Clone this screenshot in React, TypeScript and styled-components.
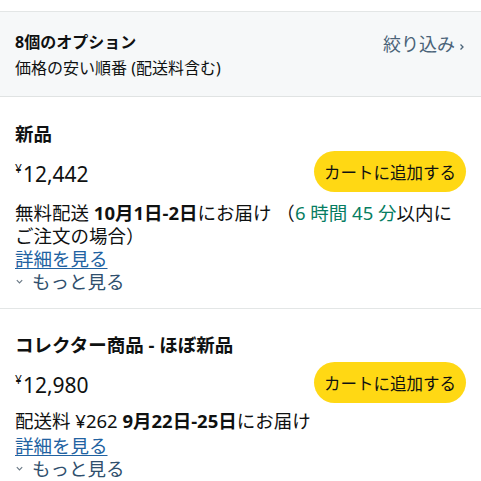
import React from 'react';
import styled, { createGlobalStyle } from 'styled-components';

const GlobalStyle = createGlobalStyle`
  html, body {
    margin: 0;
    padding: 0;
    background: #ffffff;
  }
  body {
    font-family: 'Noto Sans', 'Noto Sans CJK JP', sans-serif;
    color: #0f1111;
  }
`;

const Page = styled.div`
  width: 481px;
  height: 481px;
  overflow: hidden;
  padding-top: 11px;
  box-sizing: border-box;
`;

const Header = styled.div`
  display: flex;
  justify-content: space-between;
  align-items: flex-start;
  background: #f6f8f9;
  border-top: 1px solid #e3e6e6;
  border-bottom: 1px solid #e0e3e3;
  height: 86px;
  box-sizing: border-box;
  padding: 19px 15px 0 15px;
`;

const HeaderText = styled.div`
  display: flex;
  flex-direction: column;
`;

const Count = styled.div`
  font-size: 16px;
  font-weight: 700;
  line-height: 22px;
`;

const Sort = styled.div`
  font-size: 16px;
  line-height: 26px;
  margin-top: 2px;
`;

const Filter = styled.div`
  color: #4a6378;
  font-size: 18px;
  line-height: 26px;
  display: flex;
  align-items: center;
  gap: 3px;
`;

const Offer = styled.div<{ $last?: boolean }>`
  padding: ${(p) => (p.$last ? '23px' : '24px')} 15px 0 15px;
  height: ${(p) => (p.$last ? 'auto' : '212px')};
  box-sizing: border-box;
  border-bottom: ${(p) => (p.$last ? 'none' : '1px solid #e3e6e6')};
`;

const Title = styled.div`
  font-size: 18.5px;
  font-weight: 700;
  line-height: 26px;
`;

const PriceRow = styled.div`
  display: flex;
  justify-content: space-between;
  align-items: center;
  margin-top: 4px;
`;

const Price = styled.div`
  display: flex;
  align-items: flex-start;
  font-size: 21px;
  line-height: 30px;
  margin-top: 4px;
`;

const Yen = styled.span`
  font-size: 12px;
  line-height: 20px;
  margin-right: 1px;
`;

const CartButton = styled.button`
  background: #ffd814;
  border: none;
  border-radius: 21px;
  height: 41px;
  width: 152px;
  font-family: inherit;
  font-size: 16.5px;
  color: #0f1111;
  padding: 0;
  cursor: pointer;
`;

const Delivery = styled.div<{ $gap: number }>`
  font-size: 18.5px;
  line-height: 23px;
  margin-top: ${(p) => p.$gap}px;
  padding-right: 2px;
`;

const Bold = styled.b`
  font-weight: 700;
`;

const Countdown = styled.span`
  color: #067d62;
`;

const Link = styled.a<{ $gap?: number }>`
  display: block;
  font-size: 18.5px;
  line-height: 23px;
  margin-top: ${(p) => p.$gap ?? 0}px;
  color: #2162a1;
  text-decoration: underline;
  text-underline-offset: 2px;
`;

const More = styled.div`
  display: flex;
  align-items: center;
  gap: 8px;
  font-size: 18.5px;
  line-height: 23px;
  color: #2f4f6d;
`;

const Chevron = () => (
  <svg width='9' height='9' viewBox='0 0 10 10'>
    <path d='M2 3.5 L5 6.5 L8 3.5' fill='none' stroke='#6b7a86' strokeWidth='1.3' />
  </svg>
);

const RightChevron = () => (
  <svg width='8' height='10' viewBox='0 0 8 10' style={{ marginTop: 6 }}>
    <path d='M2.5 2.5 L5 5 L2.5 7.5' fill='none' stroke='#4a6378' strokeWidth='1.3' />
  </svg>
);

const App: React.FC = () => {
  return (
    <Page>
      <GlobalStyle />
      <Header>
        <HeaderText>
          <Count>8個のオプション</Count>
          <Sort>価格の安い順番 (配送料含む)</Sort>
        </HeaderText>
        <Filter>
          絞り込み
          <RightChevron />
        </Filter>
      </Header>

      <Offer>
        <Title>新品</Title>
        <PriceRow>
          <Price>
            <Yen>¥</Yen>12,442
          </Price>
          <CartButton>カートに追加する</CartButton>
        </PriceRow>
        <Delivery $gap={9}>
          無料配送 <Bold>10月1日-2日</Bold>にお届け （<Countdown>6 時間 45 分</Countdown>以内にご注文の場合）
        </Delivery>
        <Link>詳細を見る</Link>
        <More>
          <Chevron />
          もっと見る
        </More>
      </Offer>

      <Offer $last>
        <Title>コレクター商品 - ほぼ新品</Title>
        <PriceRow>
          <Price>
            <Yen>¥</Yen>12,980
          </Price>
          <CartButton>カートに追加する</CartButton>
        </PriceRow>
        <Delivery $gap={6}>
          配送料 ¥262 <Bold>9月22日-25日</Bold>にお届け
        </Delivery>
        <Link $gap={2}>詳細を見る</Link>
        <More>
          <Chevron />
          もっと見る
        </More>
      </Offer>
    </Page>
  );
};

export default App;
